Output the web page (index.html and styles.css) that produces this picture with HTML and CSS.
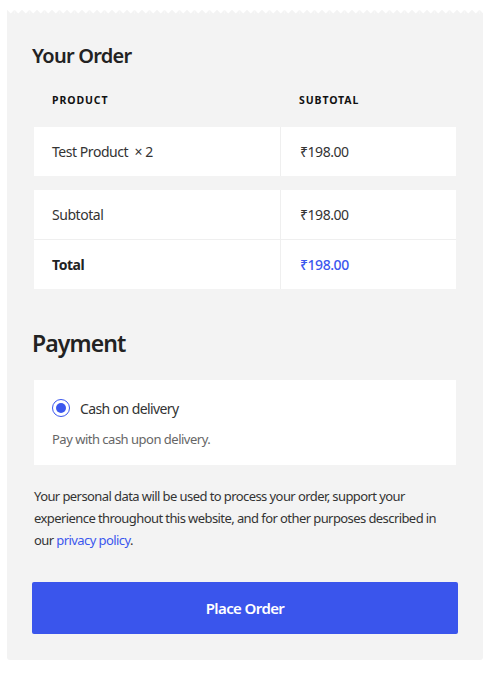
FILE: index.html
```html
<!DOCTYPE html>
<html lang="en">
<head>
<meta charset="utf-8">
<title>Checkout</title>
<link rel="stylesheet" href="styles.css">
</head>
<body>
<div class="checkout">
  <h2 class="title">Your Order</h2>
  <div class="order-head">
    <div class="c1">Product</div>
    <div class="c2">Subtotal</div>
  </div>
  <div class="box">
    <div class="row">
      <div class="c1">Test Product&nbsp;&nbsp;<span class="qty">×&nbsp;2</span></div>
      <div class="c2">₹198.00</div>
    </div>
  </div>
  <div class="box totals">
    <div class="row">
      <div class="c1">Subtotal</div>
      <div class="c2">₹198.00</div>
    </div>
    <div class="row total">
      <div class="c1">Total</div>
      <div class="c2 accent">₹198.00</div>
    </div>
  </div>

  <h2 class="title pay">Payment</h2>
  <div class="box method">
    <label class="radio-row"><span class="radio"></span>Cash on delivery</label>
    <p class="desc">Pay with cash upon delivery.</p>
  </div>

  <p class="privacy">Your personal data will be used to process your order, support your experience throughout this website, and for other purposes described in our <a href="#" class="link">privacy policy</a>.</p>

  <button class="place" type="button">Place Order</button>
</div>
</body>
</html>
```

FILE: styles.css
```css
* { box-sizing: border-box; }

body {
  margin: 0;
  background: #ffffff;
  font-family: "Segoe UI", "Noto Sans", "Open Sans", sans-serif;
  color: #333333;
}

.checkout {
  position: relative;
  width: 476px;
  margin: 14px 0 16px 7px;
  padding: 30px 25px 26px 25px;
  background: #f3f3f3;
  border-radius: 0 0 3px 3px;
  letter-spacing: -0.45px;
}

.checkout::before {
  content: "";
  position: absolute;
  left: 0;
  right: 0;
  top: -5px;
  height: 5px;
  background-image:
    linear-gradient(-45deg, #f3f3f3 3px, transparent 0),
    linear-gradient(45deg, #f3f3f3 3px, transparent 0);
  background-position: left bottom;
  background-repeat: repeat-x;
  background-size: 7.5px 7.5px;
}

.title {
  margin: 0 0 12px 0;
  font-size: 20px;
  line-height: 24px;
  font-weight: 600;
  letter-spacing: -0.75px;
  color: #222222;
}

.title.pay {
  margin: 39px 0 22px 0;
  font-size: 23px;
  line-height: 30px;
  letter-spacing: -0.9px;
}

.order-head {
  display: grid;
  grid-template-columns: 247px 1fr;
  height: 40px;
  margin: 0 2px 7px 2px;
  align-items: center;
  font-size: 10.5px;
  font-weight: 700;
  letter-spacing: 0.9px;
  text-transform: uppercase;
  color: #111111;
}

.order-head .c1,
.order-head .c2 { padding-left: 18px; }

.box {
  margin: 0 2px;
  background: #ffffff;
}

.totals { margin-top: 14px; }

.row {
  display: grid;
  grid-template-columns: 246px 1fr;
  height: 49px;
  align-items: stretch;
  font-size: 14px;
  color: #333333;
}

.row + .row { border-top: 1px solid #efefef; height: 50px; }

.row .c1,
.row .c2 {
  display: flex;
  align-items: center;
  padding-left: 18px;
}

.row .c2 {
  border-left: 1px solid #efefef;
  padding-left: 19px;
}

.total .c1 { font-weight: 700; color: #222222; }

.accent { color: #3b57ee; font-weight: 500; }

.method {
  padding: 18px 18px 17px 18px;
}

.radio-row {
  display: flex;
  align-items: center;
  height: 20px;
  font-size: 14px;
  letter-spacing: -0.6px;
  color: #333333;
}

.radio {
  width: 18px;
  height: 18px;
  margin: 0 10px 0 0;
  border: 1.5px solid #3b57ee;
  border-radius: 50%;
  display: flex;
  align-items: center;
  justify-content: center;
  flex-shrink: 0;
}

.radio::after {
  content: "";
  width: 10px;
  height: 10px;
  border-radius: 50%;
  background: #3b57ee;
}

.desc {
  margin: 12px 0 0 0;
  font-size: 13px;
  line-height: 18px;
  letter-spacing: -0.5px;
  color: #666666;
}

.privacy {
  margin: 20px 2px 0 2px;
  font-size: 13px;
  line-height: 22px;
  letter-spacing: -0.58px;
  color: #333333;
}

.link {
  color: #3b57ee;
  text-decoration: none;
}

.place {
  display: block;
  width: 100%;
  height: 52px;
  margin-top: 31px;
  border: 0;
  border-radius: 2px;
  background: #3a55ec;
  color: #ffffff;
  font-family: inherit;
  font-size: 15px;
  font-weight: 600;
  letter-spacing: -0.6px;
  cursor: pointer;
}
```
